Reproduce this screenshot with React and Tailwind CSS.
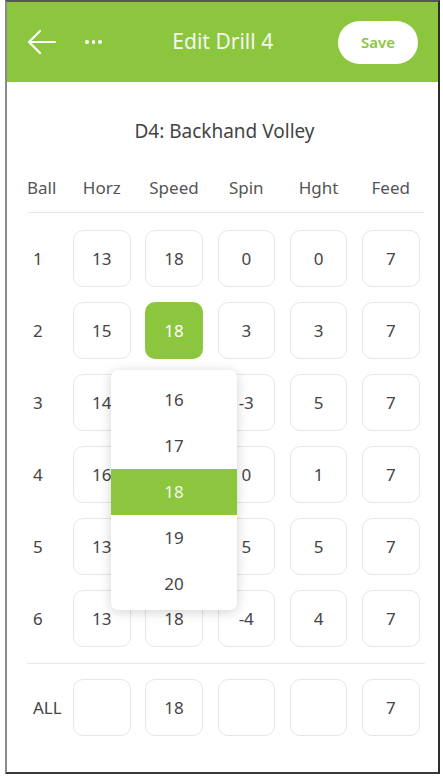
import React from 'react';

const GREEN = 'bg-[#8cc63f]';

const rows = [
  { label: '1', values: ['13', '18', '0', '0', '7'] },
  { label: '2', values: ['15', '18', '3', '3', '7'], active: 1 },
  { label: '3', values: ['14', '18', '-3', '5', '7'] },
  { label: '4', values: ['16', '18', '0', '1', '7'] },
  { label: '5', values: ['13', '18', '5', '5', '7'] },
  { label: '6', values: ['13', '18', '-4', '4', '7'] },
];

const headers = ['Horz', 'Speed', 'Spin', 'Hght', 'Feed'];
const options = ['16', '17', '18', '19', '20'];

function Cell({ value, active }) {
  return (
    <div
      className={`w-[57.5px] h-[57px] rounded-[10px] flex items-center justify-center text-[17px] ${
        active
          ? `${GREEN} text-white`
          : 'bg-white border border-[#e6e6e6] text-[#444]'
      }`}
    >
      {value}
    </div>
  );
}

function Row({ label, values, active }) {
  return (
    <div className="flex items-center">
      <div className="w-[66px] pl-[26px] text-[17px] text-[#444]">{label}</div>
      <div className="flex gap-[14.75px]">
        {values.map((v, i) => (
          <Cell key={i} value={v} active={active === i} />
        ))}
      </div>
    </div>
  );
}

export default function App() {
  return (
    <div
      className="w-[443px] h-[778px] bg-white"
      style={{ fontFamily: '"Noto Sans", Lato, sans-serif' }}
    >
      <div className="relative ml-[5px] w-[435px] h-[774px] border-t-2 border-t-[#555] border-l-2 border-l-[#8a8a8a] border-r-2 border-r-[#2e2e2e] border-b-2 border-b-[#3a3a3a] bg-white overflow-hidden">
        {/* header */}
        <div className={`${GREEN} h-[80px] flex items-center pl-[20px] pr-[20px]`}>
          <svg width="30" height="26" viewBox="0 0 30 26" fill="none" className="shrink-0">
            <path d="M2 13H28M13 2L2 13L13 24" stroke="white" strokeWidth="2.2" strokeLinecap="round" strokeLinejoin="round" />
          </svg>
          <div className="ml-[28px] flex gap-[3px]">
            <span className="w-[3.5px] h-[3.5px] rounded-full bg-white" />
            <span className="w-[3.5px] h-[3.5px] rounded-full bg-white" />
            <span className="w-[3.5px] h-[3.5px] rounded-full bg-white" />
          </div>
          <div className="flex-1 text-center text-[21px] text-[#f3f7ec] pl-[6px]">Edit Drill 4</div>
          <button className="w-[80px] h-[43px] rounded-full bg-white text-[#8cc63f] font-semibold text-[15px]">
            Save
          </button>
        </div>

        <div className="mt-[36px] h-[26px] leading-[26px] text-center text-[19px] text-[#444] pl-[4px]">
          D4: Backhand Volley
        </div>

        {/* column headers */}
        <div className="mt-[31px] h-[26px] leading-[26px] flex items-center text-[17px] text-[#555]">
          <div className="w-[66px] pl-[20px]">Ball</div>
          <div className="flex gap-[14.75px]">
            {headers.map((h) => (
              <div key={h} className="w-[57.5px] text-center">{h}</div>
            ))}
          </div>
        </div>

        <div className="mt-[11px] ml-[20px] mr-[14px] h-px bg-[#e8e8e8]" />

        <div className="mt-[17px] flex flex-col gap-[15px]">
          {rows.map((r) => (
            <Row key={r.label} {...r} />
          ))}
        </div>

        <div className="mt-[16px] ml-[20px] mr-[13px] h-px bg-[#e8e8e8]" />

        <div className="mt-[15px]">
          <Row label="ALL" values={['', '18', '', '', '7']} />
        </div>

        {/* speed picker dropdown */}
        <div className="absolute left-[104px] top-[368px] w-[126px] h-[240px] bg-white rounded-[7px] shadow-[0_2px_12px_rgba(0,0,0,0.18)] pt-[7px] overflow-hidden">
          {options.map((o) => (
            <div
              key={o}
              className={`h-[46px] flex items-center justify-center text-[17px] ${
                o === '18' ? `${GREEN} text-[#f3f7ec]` : 'text-[#444]'
              }`}
            >
              {o}
            </div>
          ))}
        </div>
      </div>
    </div>
  );
}
